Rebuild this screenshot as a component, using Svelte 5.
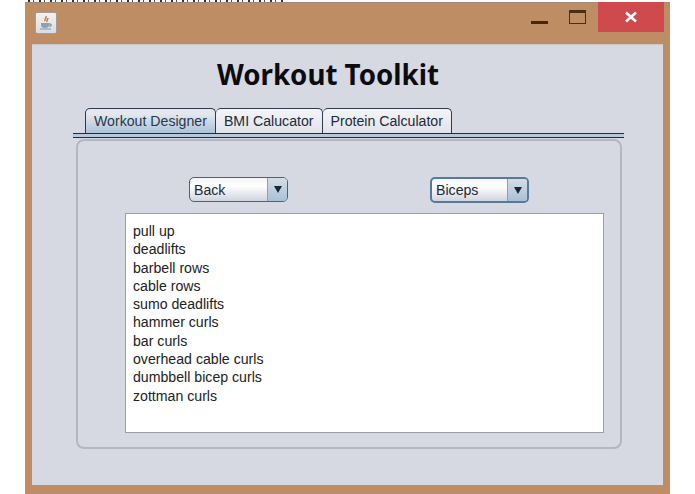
<script>
  let muscleLeft = "Back";
  let muscleRight = "Biceps";
  const tabs = ["Workout Designer", "BMI Calucator", "Protein Calculator"];
  const exercises = [
    "pull up",
    "deadlifts",
    "barbell rows",
    "cable rows",
    "sumo deadlifts",
    "hammer curls",
    "bar curls",
    "overhead cable curls",
    "dumbbell bicep curls",
    "zottman curls",
  ];
</script>

<div class="page">
  <div class="scrap"></div>
  <div class="window">
    <div class="titlebar">
      <div class="appicon">
        <svg width="16" height="16" viewBox="0 0 16 16">
          <path d="M8 1c1 2-2 3-1 5 M10 3c0 2-2 2-1 4" stroke="#c8602a" stroke-width="1.3" fill="none" />
          <path d="M3 8h8v2c0 2-1 3-4 3s-4-1-4-3z" fill="#8f9fb0" />
          <path d="M11 9h2v2h-2" stroke="#6d8095" fill="none" />
          <path d="M2 14h11" stroke="#7c97b3" stroke-width="1" />
        </svg>
      </div>
      <div class="controls">
        <div class="min"></div>
        <div class="max"></div>
        <div class="close">
          <svg width="14" height="12" viewBox="0 0 14 12">
            <path d="M2 1.5l10 9M12 1.5l-10 9" stroke="#fff" stroke-width="2.6" />
          </svg>
        </div>
      </div>
    </div>

    <div class="content">
      <h1>Workout Toolkit</h1>

      <div class="tabs">
        {#each tabs as tab, i}
          <div class="tab" class:active={i === 0}>{tab}</div>
        {/each}
      </div>
      <div class="tabline"></div>

      <div class="panel">
        <div class="combos">
          <div class="combo">
            <span class="value">{muscleLeft}</span>
            <span class="arrow"><i></i></span>
          </div>
          <div class="combo focused">
            <span class="value">{muscleRight}</span>
            <span class="arrow"><i></i></span>
          </div>
        </div>
        <div class="list">
          {#each exercises as item}
            <div>{item}</div>
          {/each}
        </div>
      </div>
    </div>
  </div>
</div>

<style>
  :global(body) {
    margin: 0;
    background: #fff;
  }

  .page {
    width: 695px;
    height: 494px;
    overflow: hidden;
    display: flex;
    flex-direction: column;
    font-family: "Liberation Sans", Arial, sans-serif;
  }

  /* bit of whatever sits behind the window, only its bottom edge shows */
  .scrap {
    height: 2px;
    width: 258px;
    margin-left: 28px;
    flex: none;
    background: repeating-linear-gradient(90deg, #333 0 2px, #fff 2px 5px, #555 5px 6px, #fff 6px 11px);
  }

  .window {
    width: 645px;
    height: 492px;
    margin-left: 25px;
    box-sizing: border-box;
    background: #bf8d64;
    border-top: 1px solid #a08a7c;
    padding: 0 7px 9px;
    display: flex;
    flex-direction: column;
  }

  .titlebar {
    height: 41px;
    flex: none;
    display: flex;
    justify-content: space-between;
    align-items: flex-start;
  }

  .appicon {
    width: 20px;
    height: 20px;
    margin: 9px 0 0 3px;
    background: linear-gradient(#f2f2f0, #d8dde2);
    border: 1px solid #a89a8e;
    border-radius: 2px;
    display: flex;
    align-items: center;
    justify-content: center;
  }

  .controls {
    display: flex;
    align-items: flex-start;
    margin-right: -1px;
  }

  .min {
    width: 17px;
    height: 3px;
    background: #4a2508;
    margin: 18px 21px 0 0;
  }

  .max {
    width: 15px;
    height: 10px;
    border: 1px solid #4a2f18;
    border-top-width: 3px;
    margin: 7px 12px 0 0;
  }

  .close {
    width: 66px;
    height: 30px;
    background: #cf4a4c;
    display: flex;
    align-items: center;
    justify-content: center;
    margin-top: -1px;
  }

  .content {
    flex: 1;
    background: #d6d9e1;
    border-top: 1px solid #c9c6c8;
    padding-left: 41px;
    display: flex;
    flex-direction: column;
  }

  h1 {
    margin: 9px 0 14px;
    height: 40px;
    width: 510px;
    text-align: center;
    font-family: "Noto Sans", sans-serif;
    font-size: 27.7px;
    line-height: 40px;
    font-weight: 700;
    color: #0c0c10;
  }

  .tabs {
    display: flex;
    margin-left: 12px;
    height: 26px;
    flex: none;
  }

  .tab {
    box-sizing: border-box;
    height: 26px;
    padding: 0 8px;
    font-size: 14.15px;
    line-height: 25px;
    color: #222a36;
    background: linear-gradient(#f4f5f8, #dfe2ea);
    border: 1px solid #2d3b50;
    border-bottom: none;
    border-left: none;
    border-radius: 5px 5px 0 0;
  }

  .tab.active {
    border-left: 1px solid #2d3b50;
    background: linear-gradient(#e4e7ee 20%, #a9c1d6);
    color: #28384c;
  }

  .tabline {
    width: 551px;
    box-sizing: border-box;
    height: 5px;
    border-top: 1px solid #1f2c40;
    border-bottom: 1px solid #1f2c40;
    background: #b9c8d8;
    margin-top: -1px;
    flex: none;
  }

  .panel {
    width: 546px;
    height: 310px;
    box-sizing: border-box;
    margin: 1px 0 0 3px;
    border: 2px solid #b2b7c1;
    border-radius: 8px;
    padding: 36px 0 0 47px;
    flex: none;
  }

  .combos {
    display: flex;
    gap: 142px;
    margin-left: 64px;
    height: 36px;
  }

  .combo {
    box-sizing: border-box;
    width: 99px;
    height: 25px;
    display: flex;
    border: 1px solid #4d6178;
    border-radius: 5px;
    background: linear-gradient(#f4f5f8, #ffffff 35%, #cfd4df);
    overflow: hidden;
    font-size: 14.15px;
    color: #222a36;
  }

  .combo.focused {
    border: 2px solid #587a9a;
    height: 26px;
  }

  .value {
    flex: 1;
    padding-left: 4px;
    line-height: 25px;
  }

  .focused .value {
    line-height: 22px;
  }

  .arrow {
    width: 19px;
    background: linear-gradient(#d4dde7, #a9c1d6);
    border-left: 1px solid #8ba0b5;
    display: flex;
    align-items: center;
    justify-content: center;
  }

  .arrow i {
    width: 0;
    height: 0;
    border-left: 4px solid transparent;
    border-right: 4px solid transparent;
    border-top: 7px solid #1c2533;
  }

  .list {
    box-sizing: border-box;
    width: 479px;
    height: 220px;
    background: #fff;
    border: 1px solid #9a9ea6;
    padding: 8px 7px;
    font-size: 14.15px;
    line-height: 18.3px;
    color: #222;
  }
</style>
